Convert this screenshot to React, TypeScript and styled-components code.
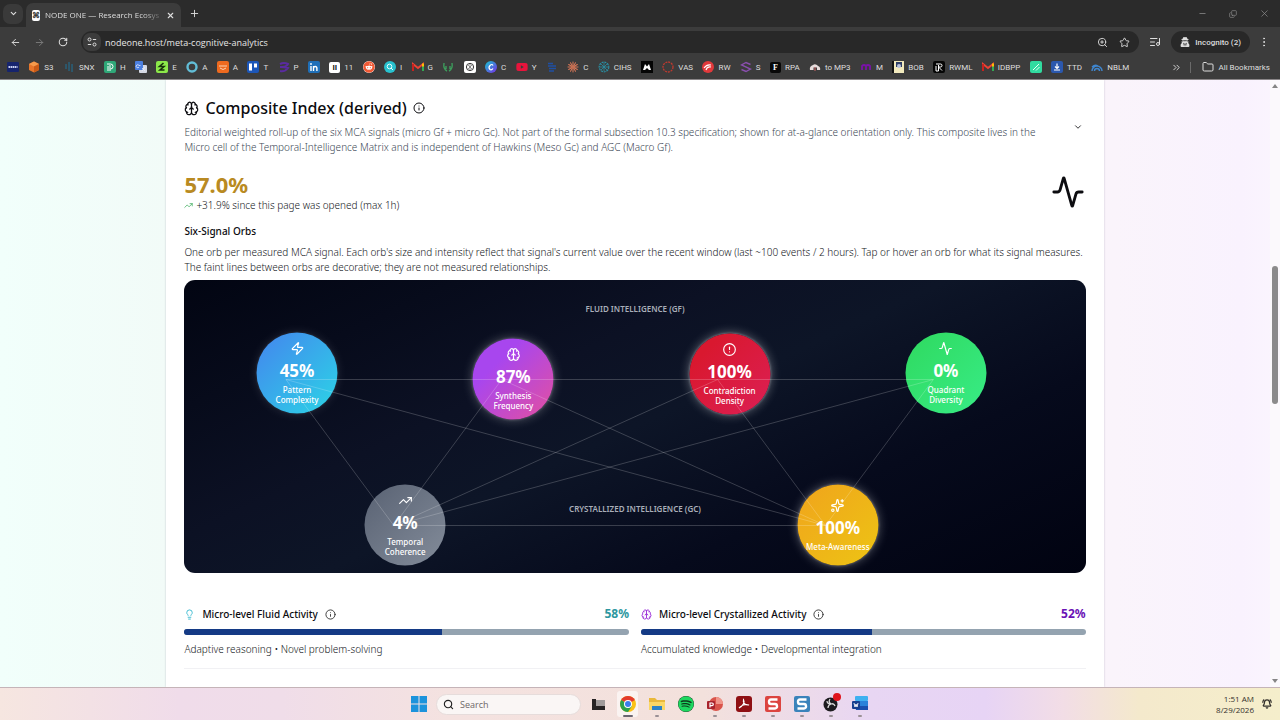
import React from 'react';
import styled, { createGlobalStyle, css } from 'styled-components';
import {
  Activity, ArrowLeft, ArrowRight, Brain, ChevronDown, ChevronsRight, CircleAlert, Copy, EllipsisVertical,
  Folder, Info, Lightbulb, ListMusic, Minus, Plus, RotateCw, Search, Sparkles, Star, TrendingUp, X, Zap, ZoomIn,
  BellRing,
} from 'lucide-react';
import { FaReddit, FaYoutube, FaSpotify, FaUserSecret } from 'react-icons/fa';

const GlobalStyle = createGlobalStyle`
  *, *::before, *::after { box-sizing: border-box; }
  body { margin: 0; font-family: "Noto Sans", "Open Sans", sans-serif; color: #0c0c10; }
  button { font: inherit; color: inherit; background: none; border: 0; padding: 0; margin: 0; cursor: pointer; }
  a { color: inherit; text-decoration: none; }
  h1, h2, h3, p { margin: 0; }
  svg { display: block; flex: none; }
`;

const Screen = styled.div`
  height: 100vh;
  display: flex;
  flex-direction: column;
  overflow: hidden;
`;

/* Browser chrome */

const Browser = styled.header`
  flex: none;
  background: #3c3c3c;
  color: #dedede;
  font-family: "Open Sans", sans-serif;
  font-size: 8px;
  border-bottom: 1px solid #8a8688;
`;

const TabStrip = styled.div`
  display: flex;
  align-items: center;
  height: 27px;
  padding-left: 3px;
  background: #2b2b2b;
`;

const RoundButton = styled.button<{ $size?: number; $bg?: string }>`
  display: flex;
  align-items: center;
  justify-content: center;
  flex: none;
  width: ${p => p.$size ?? 20}px;
  height: ${p => p.$size ?? 20}px;
  border-radius: 7px;
  background: ${p => p.$bg ?? 'transparent'};
`;

const Tab = styled.div`
  display: flex;
  align-items: center;
  align-self: flex-end;
  gap: 5px;
  width: 155px;
  height: 24px;
  margin: 0 3px 0 3px;
  padding: 0 5px 0 6px;
  border-radius: 7px 7px 0 0;
  background: #3c3c3c;
`;

const TabTitle = styled.span`
  flex: 1;
  font-size: 8px;
  line-height: 12px;
  white-space: nowrap;
  mask-image: linear-gradient(90deg, #000 85%, rgba(0, 0, 0, 0.2));
`;

const WindowControls = styled.div`
  display: flex;
  align-items: center;
  gap: 11px;
  margin-left: auto;
  padding-right: 6px;
  color: #8f8f8f;
`;

const Toolbar = styled.div`
  display: flex;
  align-items: center;
  height: 30px;
  padding: 0 6px 0 5px;
`;

const NavButtons = styled.div`
  display: flex;
  gap: 4px;
  margin-right: 8px;
`;

const AddressBar = styled.div`
  display: flex;
  align-items: center;
  gap: 2px;
  flex: 1;
  height: 22px;
  padding: 0 5px 0 2px;
  border-radius: 11px;
  background: #282828;
`;

const AddressInput = styled.input`
  flex: 1;
  min-width: 0;
  margin-left: 2px;
  padding: 0;
  border: 0;
  outline: 0;
  background: none;
  color: #e6e6e6;
  font: 9px "Open Sans", sans-serif;
`;

const Incognito = styled.button`
  display: flex;
  align-items: center;
  gap: 5px;
  height: 22px;
  margin: 0 4px 0 0;
  padding: 0 9px;
  border-radius: 11px;
  background: #282828;
  font-family: Roboto, sans-serif;
  font-weight: 500;
`;

const BookmarkBar = styled.nav`
  display: flex;
  align-items: center;
  height: 22px;
  padding: 0 10px 2px 7px;
`;

const BookmarkList = styled.div`
  display: flex;
  flex: 1;
  justify-content: space-between;
`;

const BookmarkLink = styled.a`
  display: flex;
  align-items: center;
  gap: 4px;
  height: 14px;
  white-space: nowrap;
  font-family: Roboto, sans-serif;
`;

const BookmarkEnd = styled.div`
  display: flex;
  align-items: center;
  gap: 8px;
  margin-left: 42px;
`;

const Divider = styled.span`
  width: 1px;
  height: 11px;
  margin-right: 3px;
  background: #6a6a6a;
`;

const Tile = styled.span<{ $bg: string; $fg?: string; $serif?: boolean }>`
  display: flex;
  align-items: center;
  justify-content: center;
  width: 11px;
  height: 11px;
  border-radius: 2px;
  background: ${p => p.$bg};
  color: ${p => p.$fg ?? '#fff'};
  font: bold 8px/11px ${p => (p.$serif ? '"Liberation Serif", serif' : 'Roboto, sans-serif')};
`;

/* Page */

const Viewport = styled.main`
  display: flex;
  flex: 1;
  min-height: 0;
  background: linear-gradient(90deg, #f1fffb 0%, #f2fbf8 13%, #faf4fb 87%, #f9f2fe 97%, #fbf5fe 100%);
`;

const PageScroll = styled.div`
  flex: 1;
  min-width: 0;
  overflow: hidden;
  display: flex;
  justify-content: center;
`;

const Card = styled.section`
  width: 73.8%;
  height: 100%;
  padding: 18px 18px 0 18px;
  background: #fff;
  box-shadow: 0 0 2px rgba(60, 60, 90, 0.25);
`;

const CardHeader = styled.button`
  display: flex;
  align-items: center;
  justify-content: space-between;
  width: 100%;
  text-align: left;
  padding-right: 3px;
`;

const HeaderText = styled.div`
  max-width: 868px;
`;

const Title = styled.h1`
  display: flex;
  align-items: center;
  gap: 6px;
  font-size: 16px;
  line-height: 20px;
  font-weight: 500;
`;

const Description = styled.p`
  margin-top: 7px;
  font-size: 10px;
  line-height: 15px;
  font-weight: 300;
  color: #3d4856;
`;

const Summary = styled.div`
  display: flex;
  align-items: center;
  justify-content: space-between;
  margin-top: 16px;
  padding-right: 1px;
`;

const Score = styled.div`
  font-size: 22px;
  line-height: 26px;
  font-weight: 700;
  color: #b98a22;
`;

const Trend = styled.div`
  display: flex;
  align-items: center;
  gap: 3px;
  margin-top: 1px;
  font-size: 10px;
  line-height: 15px;
  font-weight: 300;
  color: #15181c;
`;

const SubTitle = styled.h2`
  margin-top: 10px;
  font-size: 10px;
  line-height: 16px;
  font-weight: 500;
`;

const BodyText = styled.p`
  font-size: 10px;
  line-height: 15px;
  font-weight: 300;
  color: #15181c;
`;

const OrbIntro = styled(BodyText)`
  margin-top: 6px;
`;

const OrbPanel = styled.div`
  position: relative;
  height: 293px;
  margin-top: 5px;
  border-radius: 11px;
  overflow: hidden;
  background: linear-gradient(155deg, #020512 0%, #0c1124 36%, #0d1527 50%, #060a1c 72%, #010311 100%);
`;

const Links = styled.svg`
  position: absolute;
  inset: 0;
  width: 100%;
  height: 100%;
  pointer-events: none;
`;

const GroupLabel = styled.div<{ $top: number }>`
  position: absolute;
  top: ${p => p.$top}%;
  left: 50%;
  transform: translate(-50%, -50%);
  font-size: 8px;
  line-height: 10px;
  font-weight: 600;
  white-space: nowrap;
  color: #a9aeb9;
`;

const Orb = styled.button<{ $x: number; $y: number; $fill: string; $glow: number }>`
  position: absolute;
  left: ${p => p.$x}%;
  top: ${p => p.$y}%;
  display: flex;
  flex-direction: column;
  align-items: center;
  justify-content: center;
  width: 81px;
  height: 81px;
  transform: translate(-50%, -50%);
  border-radius: 50%;
  color: #fff;
  background: ${p => p.$fill};
  ${p => p.$glow > 0 && css`box-shadow: 0 0 2px 1px rgba(255, 255, 255, ${p.$glow / 2}), 0 0 11px rgba(255, 255, 255, ${p.$glow});`}
`;

const OrbValue = styled.strong`
  margin-top: 5px;
  font-size: 17px;
  line-height: 20px;
  font-weight: 700;
`;

const OrbName = styled.span`
  margin-top: 4px;
  font-size: 8px;
  line-height: 10px;
  font-weight: 500;
  text-align: center;
  white-space: pre-line;
`;

const Levels = styled.div`
  display: grid;
  grid-template-columns: 1fr 1fr;
  gap: 12px;
  margin-top: 31px;
  padding-bottom: 11px;
  border-bottom: 1px solid #f1f1f4;
`;

const LevelHead = styled.div`
  display: flex;
  align-items: center;
  gap: 7px;
  height: 20px;
`;

const LevelName = styled.h3`
  font-size: 10px;
  line-height: 16px;
  font-weight: 500;
`;

const LevelValue = styled.span<{ $color: string }>`
  margin-left: auto;
  font-size: 12px;
  line-height: 16px;
  font-weight: 700;
  color: ${p => p.$color};
`;

const Meter = styled.div`
  height: 6px;
  margin: 5px 0 7px;
  border-radius: 3px;
  overflow: hidden;
  background: #94a3b0;
`;

const MeterFill = styled.div`
  height: 100%;
  background: #143a85;
`;

const ScrollTrack = styled.div`
  display: flex;
  flex-direction: column;
  align-items: center;
  flex: none;
  width: 10px;
  padding: 4px 0;
  background: #fbf9fc;
`;

const ScrollArrow = styled.span<{ $down?: boolean }>`
  border: 3px solid transparent;
  border-top-width: ${p => (p.$down ? 4 : 0)}px;
  border-bottom-width: ${p => (p.$down ? 0 : 4)}px;
  border-top-color: #858585;
  border-bottom-color: #858585;
`;

const ScrollThumb = styled.span`
  width: 6px;
  height: 138px;
  margin: 178px 0 auto;
  border-radius: 3px;
  background: #8b8b8b;
`;

/* Taskbar */

const Taskbar = styled.footer`
  display: grid;
  grid-template-columns: 1fr auto 1fr;
  align-items: center;
  flex: none;
  height: 33px;
  padding: 0 8px 0 13px;
  border-top: 1px solid #c5b4b8;
  background: linear-gradient(90deg, #f6e6e0 0%, #f0dcea 14%, #f0dde9 22%, #f4e2e0 35%, #f3e1dc 55%, #e8d6f3 68%, #e7d4f5 77%, #f2dde6 83%, #f4e9cc 89%, #f5eecb 100%);
`;

const Dock = styled.div`
  grid-column: 2;
  display: flex;
  align-items: center;
`;

const SearchBox = styled.label`
  display: flex;
  align-items: center;
  gap: 6px;
  width: 145px;
  height: 21px;
  margin: 0 3px 0 9px;
  padding: 0 6px;
  border: 1px solid #e6dcdb;
  border-radius: 11px;
  background: #faf6f5;
  color: #222;
`;

const SearchInput = styled.input`
  width: 100%;
  min-width: 0;
  padding: 0;
  border: 0;
  outline: 0;
  background: none;
  font: 9px "Open Sans", sans-serif;
  &::placeholder { color: #6d6767; opacity: 1; }
`;

const DockButton = styled.button<{ $active?: boolean; $running?: boolean }>`
  position: relative;
  display: flex;
  align-items: center;
  justify-content: center;
  width: 21px;
  height: 26px;
  margin: 0 4px;
  border-radius: 3px;
  background: ${p => (p.$active ? 'rgba(255,255,255,0.6)' : 'transparent')};
  &::after {
    content: '';
    display: ${p => (p.$running || p.$active ? 'block' : 'none')};
    position: absolute;
    bottom: 0;
    width: ${p => (p.$active ? 10 : 4)}px;
    height: 2px;
    border-radius: 1px;
    background: ${p => (p.$active ? '#6b6670' : '#9a9096')};
  }
`;

const StartButton = styled(DockButton)`
  width: 16px;
  margin: 0;
`;

const Tray = styled.div`
  display: flex;
  align-items: center;
  justify-content: flex-end;
  gap: 8px;
  font-family: "Open Sans", sans-serif;
  font-size: 8px;
  line-height: 11px;
  text-align: right;
  color: #33302c;
`;

function Svg({ children, s = 12, box = 12 }: { children: React.ReactNode; s?: number; box?: number }) {
  return <svg width={s} height={s} viewBox={`0 0 ${box} ${box}`} fill="none">{children}</svg>;
}

function Gmail() {
  return (
    <Svg>
      <path d="M1 10V3l5 4 5-4v7" stroke="#ea4335" strokeWidth="2" />
      <path d="M1 3v7" stroke="#c5221f" strokeWidth="2" />
      <path d="M11 4v6" stroke="#34a853" strokeWidth="2" />
      <path d="M11 2.5v3" stroke="#fbbc04" strokeWidth="2" />
    </Svg>
  );
}

function Burst({ color, rays = 12 }: { color: string; rays?: number }) {
  return (
    <Svg>
      {Array.from({ length: rays }, (_, i) => (
        <path key={i} d="M6 5V1" stroke={color} strokeWidth="1" strokeLinecap="round" transform={`rotate(${(360 / rays) * i} 6 6)`} />
      ))}
    </Svg>
  );
}

const bookmarks: { name: string; label?: string; icon: React.ReactNode }[] = [
  { name: 'Home', icon: <Svg><rect y="1" width="12" height="10" rx="1" fill="#16246e" /><path d="M1.5 6h9" stroke="#c7cff2" strokeWidth="2" strokeDasharray="1.6 .5" /></Svg> },
  { name: 'S3', label: 'S3', icon: <Svg><path d="M6 .5l5 2.5v6L6 11.5 1 9V3z" fill="#e8762b" /><path d="M1 3l5 2.5L11 3 6 .5z" fill="#f59a4c" /><path d="M6 5.5v6L11 9V3z" fill="#c95a17" /></Svg> },
  { name: 'SNX', label: 'SNX', icon: <Svg><path d="M3 3v5M6 1v9M9 3v8" stroke="#23698a" strokeWidth="1.2" /></Svg> },
  { name: 'H', label: 'H', icon: <Svg><rect width="12" height="12" rx="2" fill="#2fa878" /><path d="M3 3h3.500a2.500 2.500 0 010 5M4 5v5M6 4v6" stroke="#fff" /></Svg> },
  { name: 'Translate', icon: <Svg><rect x="4" y="4" width="8" height="8" rx="1" fill="#d5d9e4" /><rect width="8" height="9" rx="1" fill="#4b7fe0" /><path d="M5.500 4.500H4a1.500 1.500 0 100 1.500M7 7l3 3M10 6L7 10" stroke="#e8eefb" strokeWidth=".8" /></Svg> },
  { name: 'E', label: 'E', icon: <Svg><rect width="12" height="12" rx="2" fill="#8ce84a" /><path d="M7.500 2L3.500 5.500h4.500L4 9h4.500" stroke="#17300c" strokeWidth="1.6" /></Svg> },
  { name: 'Ring', label: 'A', icon: <Svg><circle cx="6" cy="6" r="4.5" stroke="#62bdd6" strokeWidth="2.4" /></Svg> },
  { name: 'Audio', label: 'A', icon: <Svg><rect width="12" height="12" rx="2" fill="#ee6a1f" /><path d="M2 5h8M3 7q3 3 6 0" stroke="#fbd2b4" /></Svg> },
  { name: 'T', label: 'T', icon: <Svg><rect width="12" height="12" rx="2" fill="#1c56b8" /><rect x="2" y="2.5" width="3" height="7" fill="#fff" /><rect x="7" y="2.5" width="3" height="4" fill="#fff" /></Svg> },
  { name: 'P', label: 'P', icon: <Svg><path d="M2 3q4-2 8 0-1 3-8 3 5 0 8 1-3 4-8 3" stroke="#5a2ba0" strokeWidth="2" /></Svg> },
  { name: 'LinkedIn', icon: <Svg><rect width="12" height="12" rx="2" fill="#1f6fb8" /><path d="M3 5v5M5.500 10V5M5.500 7.500q0-2 1.700-2t1.700 2V10" stroke="#fff" strokeWidth="1.4" /><circle cx="3" cy="3" r=".9" fill="#fff" /></Svg> },
  { name: '11', label: '11', icon: <Tile $bg="#fff" $fg="#111">II</Tile> },
  { name: 'Reddit', icon: <FaReddit size={12} color="#f05a36" style={{ background: '#fff', borderRadius: '50%' }} /> },
  { name: 'I', label: 'I', icon: <Svg><circle cx="6" cy="6" r="6" fill="#28c2cf" /><circle cx="5.5" cy="5.5" r="2.3" stroke="#e8ffff" /><path d="M7 7l2 2" stroke="#e8ffff" /></Svg> },
  { name: 'Gmail', label: 'G', icon: <Gmail /> },
  { name: 'Laurel', icon: <Svg><path d="M2 2q-1 6 3 8M10 2q1 6-3 8M4 5v3M8 5v3" stroke="#3d9c5c" strokeWidth="1.4" /></Svg> },
  { name: 'Chat', icon: <Svg><rect width="12" height="12" rx="2" fill="#fff" /><circle cx="6" cy="6" r="3.6" stroke="#333" /><path d="M4 4l4 4M8 4L4 8M6 2.500v7" stroke="#555" strokeWidth=".6" /></Svg> },
  { name: 'Canva', label: 'C', icon: <Svg><defs><linearGradient id="canva" x2="1" y2="1"><stop stopColor="#14c8d0" /><stop offset="1" stopColor="#7a2be8" /></linearGradient></defs><circle cx="6" cy="6" r="6" fill="url(#canva)" /><path d="M8 4.500Q7 2.500 5 4.500t0 4q1.500 1 3-1" stroke="#fff" strokeWidth="1.2" /></Svg> },
  { name: 'YouTube', label: 'Y', icon: <FaYoutube size={12} color="#e8143c" /> },
  { name: 'Docs', icon: <Svg><path d="M2 2.500h5M2 5h8M3 7.500h7M3 10h5" stroke="#1f4fa3" strokeWidth="1.5" /></Svg> },
  { name: 'C', label: 'C', icon: <Burst color="#d97757" /> },
  { name: 'CIHS', label: 'CIHS', icon: <Svg><circle cx="6" cy="6" r="4.8" stroke="#2a8fa3" strokeWidth="1.2" strokeDasharray="2 .8" /><path d="M6 2v8M2 6h8M3 3l6 6M9 3L3 9" stroke="#2a8fa3" strokeWidth=".8" /></Svg> },
  { name: 'Arch', icon: <Svg><rect width="12" height="12" fill="#050505" /><path d="M2 9l2-6 2 2.500L8 3l2 6H8L6 7 4 9z" fill="#fff" /></Svg> },
  { name: 'VAS', label: 'VAS', icon: <Svg><circle cx="6" cy="6" r="5" stroke="#c0392f" strokeWidth="1.3" strokeDasharray="2 .9" /></Svg> },
  { name: 'RW', label: 'RW', icon: <Svg><circle cx="6" cy="6" r="6" fill="#e0393b" /><path d="M2 7q3-4 7-3M4 9q1-4 5-3" stroke="#fff" strokeWidth="1.2" /></Svg> },
  { name: 'S', label: 'S', icon: <Svg><path d="M10.500 3.500L6 1.500 1.500 4 10.500 8 6 10.500 1.500 8.500" stroke="#8a4fae" strokeWidth="1.4" /></Svg> },
  { name: 'RPA', label: 'RPA', icon: <Tile $bg="#080808" $serif>F</Tile> },
  { name: 'to MP3', label: 'to MP3', icon: <Svg><path d="M1 9a4 4 0 013-5 3.500 3.500 0 015 1 3 3 0 012 4H8V6.500H4.500V9z" fill="#e6dcdc" /><path d="M6 6v4" stroke="#c66" /></Svg> },
  { name: 'M', label: 'M', icon: <Svg><path d="M2 9V5q2-2 4 0v4M6 5q2-2 4 0v4" stroke="#7a12a8" strokeWidth="1.8" /></Svg> },
  { name: 'BOB', label: 'BOB', icon: <Svg><rect width="12" height="12" fill="#f1e9bd" /><path d="M0 0h2v12H0z" fill="#111" /><path d="M4 1h6v5H4z" fill="#2d3e66" /><circle cx="7" cy="5" r="2" fill="#b6c0da" /></Svg> },
  { name: 'RWML', label: 'RWML', icon: <Svg><rect width="12" height="12" rx="2" fill="#060606" /><path d="M3 3h4.500a1.500 1.500 0 010 3H5.500L9 9.500M3 5v5h2.500V4" stroke="#fff" /></Svg> },
  { name: 'IDBPP', label: 'IDBPP', icon: <Gmail /> },
  { name: 'Pen', icon: <Svg><rect width="12" height="12" rx="2" fill="#31dba0" /><path d="M3 9l6-6M6 9.500L9.500 6" stroke="#e9fff7" /></Svg> },
  { name: 'TTD', label: 'TTD', icon: <Svg><rect width="12" height="12" rx="2" fill="#2b58ae" /><path d="M6 2.500v4M4 5.500l2 2 2-2M3 9h6" stroke="#fff" strokeWidth="1.2" /></Svg> },
  { name: 'NBLM', label: 'NBLM', icon: <Svg><path d="M1 10a5 5 0 0110 0M3.500 10a2.500 2.500 0 015 0M1 6q3-3 6-1" stroke="#3f86cf" strokeWidth="1.4" /></Svg> },
];

const orbs = [
  { value: '45%', name: 'Pattern\nComplexity', Icon: Zap, x: 12.5, y: 31.8, glow: 0.12, fill: 'linear-gradient(135deg, #4484ee, #2bd5e6)' },
  { value: '87%', name: 'Synthesis\nFrequency', Icon: Brain, x: 36.5, y: 33.8, glow: 0.3, fill: 'linear-gradient(135deg, #a846ee 30%, #e4509f)' },
  { value: '100%', name: 'Contradiction\nDensity', Icon: CircleAlert, x: 60.5, y: 32, glow: 0.4, fill: 'linear-gradient(135deg, #d9182f 20%, #dc1f55)' },
  { value: '0%', name: 'Quadrant\nDiversity', Icon: Activity, x: 84.5, y: 31.7, glow: 0, fill: 'linear-gradient(135deg, #2fd95f, #38ec86)' },
  { value: '4%', name: 'Temporal\nCoherence', Icon: TrendingUp, x: 24.5, y: 83.5, glow: 0, fill: 'linear-gradient(135deg, #596273, #838c9a)' },
  { value: '100%', name: 'Meta-Awareness', Icon: Sparkles, x: 72.5, y: 83.6, glow: 0.35, fill: 'linear-gradient(135deg, #f0a41c, #edc414)' },
];

const upper = [102, 318, 534, 750];
const lower = [210, 642];

const dock: { name: string; running?: boolean; active?: boolean; icon: React.ReactNode }[] = [
  { name: 'Task view', icon: <Svg s={16} box={16}><rect x="2" y="4" width="12" height="10" fill="#d8d2d2" /><path d="M1 3h4v7h9v4H1z" fill="#262324" /><path d="M5 4h9v6H5z" fill="#a09b9b" /></Svg> },
  { name: 'Chrome', active: true, icon: <Svg s={16} box={16}><circle cx="8" cy="8" r="8" fill="#fbc116" /><path d="M8 8L1.100 4A8 8 0 0114.900 4z" fill="#e33b2e" /><path d="M8 8L1.100 4A8 8 0 008 16l4-6z" fill="#2ba24c" /><circle cx="8" cy="8" r="4" fill="#fff" /><circle cx="8" cy="8" r="3" fill="#3b7ded" /></Svg> },
  { name: 'Files', running: true, icon: <Svg s={16} box={16}><path d="M0 2h6l2 2h8v10H0z" fill="#e9b83b" /><path d="M0 6h16v8H0z" fill="#fbd765" /><path d="M3 10h10v4H3z" fill="#2d83c6" /></Svg> },
  { name: 'Spotify', icon: <FaSpotify size={16} color="#1ed760" style={{ background: '#0d3a1c', borderRadius: '50%' }} /> },
  { name: 'PowerPoint', running: true, icon: <Svg s={16} box={16}><circle cx="9" cy="8" r="7" fill="#d9534a" /><path d="M9 1a7 7 0 017 7H9z" fill="#f0958a" /><rect y="5" width="8" height="8" rx="1" fill="#a8232c" /><path d="M3 11.500V7h2a1.300 1.300 0 010 2.600H3" stroke="#fff" strokeWidth="1.2" /></Svg> },
  { name: 'Acrobat', running: true, icon: <Svg s={16} box={16}><rect width="16" height="16" rx="3" fill="#8f0f13" /><path d="M3 12c4-2 6-6 4.500-8.500-1 3 2 6 5.500 5.500-3-1-7 0-10 3z" stroke="#fff" strokeWidth="1.1" /></Svg> },
  { name: 'Snagit', running: true, icon: <Svg s={16} box={16}><rect width="16" height="16" rx="2" fill="#dc4440" /><path d="M12.500 3.500H6a2 2 0 00-2 2.200Q4 8 6 8h4q2 0 2 2.200a2 2 0 01-2 2.300H3.500" stroke="#fff" strokeWidth="2.4" /></Svg> },
  { name: 'Snagit Editor', running: true, icon: <Svg s={16} box={16}><rect width="16" height="16" rx="2" fill="#3a83bb" /><path d="M12.500 3.500H6a2 2 0 00-2 2.200Q4 8 6 8h4q2 0 2 2.200a2 2 0 01-2 2.300H3.500" stroke="#fff" strokeWidth="2.4" /></Svg> },
  { name: 'OBS', running: true, icon: <svg width="16" height="16" viewBox="0 0 16 16" fill="none" overflow="visible"><circle cx="7.5" cy="8.5" r="7" fill="#1d1b1f" /><path d="M7 3q-2 3 1 5 3-1 4 2M8 8q-3 1-3 4M8 8q-4 0-4-3" stroke="#d8d8d8" strokeWidth="1.3" /><circle cx="14" cy="1" r="4" fill="#e0131b" /></svg> },
  { name: 'Word', running: true, icon: <Svg s={16} box={16}><rect x="3" width="13" height="5" rx="1" fill="#3fb0f0" /><path d="M3 5h13v5H3z" fill="#2a82da" /><path d="M3 10h13v4H4z" fill="#1a4fae" /><rect y="5" width="8" height="8" rx="1" fill="#173f8f" /><path d="M2 7l1 4 1-3 1 3 1-4" stroke="#fff" strokeWidth=".9" /></Svg> },
];

function Level({ name, value, color, icon, note }: { name: string; value: number; color: string; icon: React.ReactNode; note: string }) {
  return (
    <div>
      <LevelHead>
        {icon}
        <LevelName>{name}</LevelName>
        <Info size={11} strokeWidth={2} color="#333" />
        <LevelValue $color={color}>{value}%</LevelValue>
      </LevelHead>
      <Meter role="progressbar" aria-label={name} aria-valuenow={value}>
        <MeterFill style={{ width: `${value}%` }} />
      </Meter>
      <BodyText>{note}</BodyText>
    </div>
  );
}

export default function App() {
  return (
    <Screen>
      <GlobalStyle />
      <Browser>
        <TabStrip>
          <RoundButton $bg="#3a3a3a" aria-label="Search tabs"><ChevronDown size={9} strokeWidth={3} /></RoundButton>
          <Tab>
            <Tile $bg="#fff" $fg="#333">⌘</Tile>
            <TabTitle>NODE ONE — Research Ecosys</TabTitle>
            <RoundButton $size={12} aria-label="Close tab"><X size={9} strokeWidth={3} /></RoundButton>
          </Tab>
          <RoundButton aria-label="New tab"><Plus size={11} /></RoundButton>
          <WindowControls>
            <RoundButton aria-label="Minimize"><Minus size={9} /></RoundButton>
            <RoundButton aria-label="Restore"><Copy size={8} style={{ transform: 'scaleY(-1)' }} /></RoundButton>
            <RoundButton aria-label="Close"><X size={11} strokeWidth={1.5} /></RoundButton>
          </WindowControls>
        </TabStrip>
        <Toolbar>
          <NavButtons>
            <RoundButton aria-label="Back"><ArrowLeft size={11} /></RoundButton>
            <RoundButton aria-label="Forward"><ArrowRight size={11} color="#7c7c7c" /></RoundButton>
            <RoundButton aria-label="Reload"><RotateCw size={10} strokeWidth={2.5} /></RoundButton>
          </NavButtons>
          <AddressBar>
            <RoundButton $size={18} $bg="#3c3c3c" aria-label="Site information">
              <Svg s={10}><circle cx="3" cy="3" r="1.8" stroke="#ddd" strokeWidth="1.2" /><path d="M7 3h4M1 9h4" stroke="#ddd" strokeWidth="1.4" /><circle cx="9" cy="9" r="1.8" stroke="#ddd" strokeWidth="1.2" /></Svg>
            </RoundButton>
            <AddressInput aria-label="Address" defaultValue="nodeone.host/meta-cognitive-analytics" />
            <RoundButton aria-label="Zoom"><ZoomIn size={11} /></RoundButton>
            <RoundButton aria-label="Bookmark"><Star size={11} /></RoundButton>
          </AddressBar>
          <RoundButton $size={32} aria-label="Media"><ListMusic size={12} /></RoundButton>
          <Incognito><FaUserSecret size={10} />Incognito (2)</Incognito>
          <RoundButton aria-label="Menu"><EllipsisVertical size={12} /></RoundButton>
        </Toolbar>
        <BookmarkBar aria-label="Bookmarks">
          <BookmarkList>
            {bookmarks.map(b => (
              <BookmarkLink key={b.name} href="#" aria-label={b.name}>{b.icon}{b.label}</BookmarkLink>
            ))}
          </BookmarkList>
          <BookmarkEnd>
            <ChevronsRight size={11} />
            <Divider />
            <BookmarkLink href="#"><Folder size={12} />All Bookmarks</BookmarkLink>
          </BookmarkEnd>
        </BookmarkBar>
      </Browser>

      <Viewport>
        <PageScroll>
          <Card>
            <CardHeader aria-expanded="true">
              <HeaderText>
                <Title><Brain size={15} />Composite Index (derived)<Info size={12} /></Title>
                <Description>
                  Editorial weighted roll-up of the six MCA signals (micro Gf + micro Gc). Not part of the formal subsection 10.3 specification; shown for at-a-glance orientation only. This composite lives in the Micro cell of the Temporal-Intelligence Matrix and is independent of Hawkins (Meso Gc) and AGC (Macro Gf).
                </Description>
              </HeaderText>
              <ChevronDown size={10} />
            </CardHeader>

            <Summary>
              <div>
                <Score>57.0%</Score>
                <Trend><TrendingUp size={9} color="#3fae5e" />+31.9% since this page was opened (max 1h)</Trend>
              </div>
              <Activity size={34} />
            </Summary>

            <SubTitle>Six-Signal Orbs</SubTitle>
            <OrbIntro>
              One orb per measured MCA signal. Each orb's size and intensity reflect that signal's current value over the recent window (last ~100 events / 2 hours). Tap or hover an orb for what its signal measures. The faint lines between orbs are decorative; they are not measured relationships.
            </OrbIntro>

            <OrbPanel>
              {orbs.map(o => (
                <Orb key={o.name} $x={o.x} $y={o.y} $fill={o.fill} $glow={o.glow}>
                  <o.Icon size={14} />
                  <OrbValue>{o.value}</OrbValue>
                  <OrbName>{o.name}</OrbName>
                </Orb>
              ))}
              <Links viewBox="0 0 902 293" preserveAspectRatio="none" stroke="#fff" strokeOpacity="0.2" aria-hidden="true">
                <path d="M102 99.500H750" />
                <path d="M210 245.500H642" />
                {upper.flatMap(u => lower.map(l => <path key={`${u}-${l}`} d={`M${u} 99.500L${l} 245.500`} />))}
              </Links>
              <GroupLabel $top={10}>FLUID INTELLIGENCE (GF)</GroupLabel>
              <GroupLabel $top={78}>CRYSTALLIZED INTELLIGENCE (GC)</GroupLabel>
            </OrbPanel>

            <Levels>
              <Level name="Micro-level Fluid Activity" value={58} color="#2d97a0" icon={<Lightbulb size={11} color="#35b8cf" />} note="Adaptive reasoning • Novel problem-solving" />
              <Level name="Micro-level Crystallized Activity" value={52} color="#6a12b5" icon={<Brain size={11} color="#9a2bd8" />} note="Accumulated knowledge • Developmental integration" />
            </Levels>
          </Card>
        </PageScroll>
        <ScrollTrack>
          <ScrollArrow />
          <ScrollThumb />
          <ScrollArrow $down />
        </ScrollTrack>
      </Viewport>

      <Taskbar>
        <Dock>
          <StartButton aria-label="Start">
            <Svg s={16} box={16}><path d="M0 0h7.500v7.500H0zM8.500 0H16v7.500H8.500zM0 8.500h7.500V16H0zM8.500 8.500H16V16H8.500z" fill="#1c93dc" /></Svg>
          </StartButton>
          <SearchBox>
            <Search size={11} strokeWidth={2.5} />
            <SearchInput aria-label="Search" placeholder="Search" />
          </SearchBox>
          {dock.map(d => (
            <DockButton key={d.name} aria-label={d.name} $active={d.active} $running={d.running}>{d.icon}</DockButton>
          ))}
        </Dock>
        <Tray>
          <div>
            <div>1:51 AM</div>
            <div>8/29/2026</div>
          </div>
          <BellRing size={10} strokeWidth={3} />
        </Tray>
      </Taskbar>
    </Screen>
  );
}
